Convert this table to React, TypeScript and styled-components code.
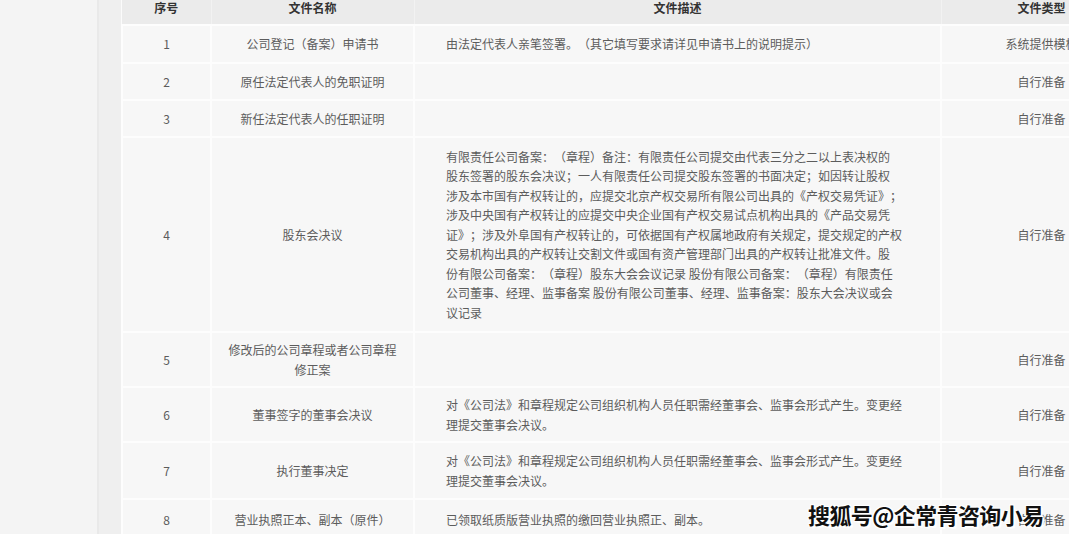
import styled, { createGlobalStyle } from 'styled-components';

const GlobalStyle = createGlobalStyle`
  html, body {
    margin: 0;
    padding: 0;
    background: #f3f3f3;
    overflow: hidden;
  }
  body {
    font-family: "Noto Sans CJK SC", "Noto Sans", sans-serif;
    text-spacing-trim: space-all;
  }
`;

const Page = styled('div')`
  position: relative;
  display: flex;
  width: 1069px;
  height: 534px;
  overflow: hidden;
`;

const Side = styled('div')`
  width: 97px;
  flex-shrink: 0;
  background: #f4f4f4;
`;

const Gutter = styled('div')`
  width: 24px;
  flex-shrink: 0;
  background: #efefef;
  border-left: 2px solid #e9e9e9;
  box-sizing: border-box;
`;

const TableWrap = styled('div')`
  flex: 1;
  overflow: hidden;
  background: #fbfbfb;
`;

const Table = styled('table')`
  width: 1020px;
  table-layout: fixed;
  border-collapse: collapse;
  font-size: 12px;
  color: #5c5c5c;
`;

const Head = styled('th')<{ $w: number }>`
  width: ${(p) => p.$w}px;
  height: 24px;
  padding: 0 0 8px;
  box-sizing: border-box;
  background: #ebebeb;
  color: #333;
  font-weight: bold;
  font-size: 12px;
  line-height: 16px;
  text-align: center;
  border-right: 1px solid #f2f2f2;
`;

const Row = styled('tr')<{ $h: number }>`
  height: ${(p) => p.$h}px;
`;

const Cell = styled('td')<{ $left?: boolean }>`
  background: #f7f7f7;
  border: 2px solid #fdfdfd;
  padding: ${(p) => (p.$left ? '0 16px 0 31px' : '0 8px')};
  text-align: ${(p) => (p.$left ? 'left' : 'center')};
  vertical-align: middle;
  line-height: 19.5px;
  white-space: nowrap;
  overflow: hidden;
`;

const Line = styled('span')`
  display: block;
`;

const Watermark = styled('div')`
  position: absolute;
  left: 808px;
  top: 498px;
  font-size: 22px;
  font-weight: bold;
  letter-spacing: -0.6px;
  color: #111;
  text-shadow: 1px 1px 0 #fff, -1px -1px 0 #fff, 1px -1px 0 #fff, -1px 1px 0 #fff,
    2px 2px 1px #fff;
  white-space: nowrap;
`;

type Item = {
  no: string;
  name: string[];
  desc: string[];
  type: string;
  h: number;
};

const items: Item[] = [
  {
    no: '1',
    name: ['公司登记（备案）申请书'],
    desc: ['由法定代表人亲笔签署。（其它填写要求请详见申请书上的说明提示）'],
    type: '系统提供模板',
    h: 38,
  },
  { no: '2', name: ['原任法定代表人的免职证明'], desc: [], type: '自行准备', h: 37 },
  { no: '3', name: ['新任法定代表人的任职证明'], desc: [], type: '自行准备', h: 37 },
  {
    no: '4',
    name: ['股东会决议'],
    desc: [
      '有限责任公司备案：（章程）备注：有限责任公司提交由代表三分之二以上表决权的',
      '股东签署的股东会决议；一人有限责任公司提交股东签署的书面决定；如因转让股权',
      '涉及本市国有产权转让的，应提交北京产权交易所有限公司出具的《产权交易凭证》；',
      '涉及中央国有产权转让的应提交中央企业国有产权交易试点机构出具的《产品交易凭',
      '证》；涉及外阜国有产权转让的，可依据国有产权属地政府有关规定，提交规定的产权',
      '交易机构出具的产权转让交割文件或国有资产管理部门出具的产权转让批准文件。股',
      '份有限公司备案：（章程）股东大会会议记录 股份有限公司备案：（章程）有限责任',
      '公司董事、经理、监事备案 股份有限公司董事、经理、监事备案：股东大会决议或会',
      '议记录',
    ],
    type: '自行准备',
    h: 195,
  },
  {
    no: '5',
    name: ['修改后的公司章程或者公司章程', '修正案'],
    desc: [],
    type: '自行准备',
    h: 55,
  },
  {
    no: '6',
    name: ['董事签字的董事会决议'],
    desc: [
      '对《公司法》和章程规定公司组织机构人员任职需经董事会、监事会形式产生。变更经',
      '理提交董事会决议。',
    ],
    type: '自行准备',
    h: 55,
  },
  {
    no: '7',
    name: ['执行董事决定'],
    desc: [
      '对《公司法》和章程规定公司组织机构人员任职需经董事会、监事会形式产生。变更经',
      '理提交董事会决议。',
    ],
    type: '自行准备',
    h: 57,
  },
  {
    no: '8',
    name: ['营业执照正本、副本（原件）'],
    desc: ['已领取纸质版营业执照的缴回营业执照正、副本。'],
    type: '自行准备',
    h: 42,
  },
];

const App = () => {
  return (
    <Page>
      <GlobalStyle />
      <Side />
      <Gutter />
      <TableWrap>
        <Table>
          <thead>
            <tr>
              <Head $w={89}>序号</Head>
              <Head $w={203}>文件名称</Head>
              <Head $w={527}>文件描述</Head>
              <Head $w={201}>文件类型</Head>
            </tr>
          </thead>
          <tbody>
            {items.map((item) => (
              <Row key={item.no} $h={item.h}>
                <Cell>{item.no}</Cell>
                <Cell>
                  {item.name.map((l) => (
                    <Line key={l}>{l}</Line>
                  ))}
                </Cell>
                <Cell $left>
                  {item.desc.map((l, i) => (
                    <Line key={i}>{l}</Line>
                  ))}
                </Cell>
                <Cell>{item.type}</Cell>
              </Row>
            ))}
          </tbody>
        </Table>
      </TableWrap>
      <Watermark>搜狐号@企常青咨询小易</Watermark>
    </Page>
  );
};

export default App;
